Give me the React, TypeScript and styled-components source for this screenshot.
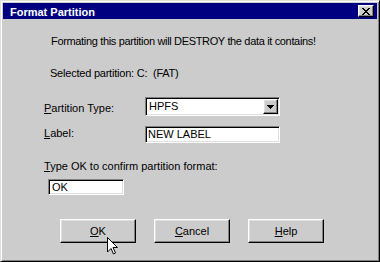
import React from 'react';
import styled, { createGlobalStyle } from 'styled-components';

const Global = createGlobalStyle`
  html, body { margin: 0; padding: 0; background: #cccccc; }
  body { font-family: "Liberation Sans", Arial, sans-serif; font-size: 11px; color: #000; }
`;

const GRAY = '#cccccc';

const Window = styled.div`
  position: relative;
  box-sizing: border-box;
  width: 380px;
  height: 262px;
  background: ${GRAY};
  border: 1px solid;
  border-color: #dfdfdf #000 #000 #dfdfdf;
  box-shadow: inset 1px 1px #fff, inset -1px -1px #808080;
  padding: 2px;
  display: flex;
  flex-direction: column;
`;

const TitleBar = styled.div`
  height: 16px;
  background: #000080;
  display: flex;
  justify-content: space-between;
  align-items: flex-start;
  padding: 0 3px 0 7px;
`;

const TitleText = styled.span`
  color: #fff;
  font-weight: bold;
  font-size: 11px;
  line-height: 14px;
  padding-top: 2px;
  white-space: nowrap;
`;

const Raised = styled.div`
  box-sizing: border-box;
  background: ${GRAY};
  border: 1px solid;
  border-color: #fff #000 #000 #fff;
  box-shadow: inset -1px -1px #808080, inset 1px 1px #dfdfdf;
  display: flex;
  align-items: center;
  justify-content: center;
`;

const CloseButton = styled(Raised)`
  width: 16px;
  height: 12px;
  margin-top: 2px;
`;

const Body = styled.div`
  display: flex;
  flex-direction: column;
  padding-left: 41px;
`;

const Message = styled.div<{ $top: number; $indent: number; $tracking?: number }>`
  margin-top: ${p => p.$top}px;
  margin-left: ${p => p.$indent}px;
  line-height: 13px;
  letter-spacing: ${p => p.$tracking ?? 0}px;
  white-space: nowrap;
`;

const Row = styled.div<{ $top: number }>`
  display: flex;
  align-items: flex-start;
  margin-top: ${p => p.$top}px;
`;

const FieldLabel = styled.label<{ $pad: number }>`
  width: 101px;
  padding-top: ${p => p.$pad}px;
  line-height: 13px;
  white-space: nowrap;
`;

const Key = styled.span`
  text-decoration: underline;
  text-decoration-thickness: 1px;
  text-underline-offset: 1px;
`;

const Sunken = styled.div<{ $w: number; $h: number }>`
  box-sizing: border-box;
  width: ${p => p.$w}px;
  height: ${p => p.$h}px;
  background: #fff;
  border: 1px solid;
  border-color: #808080 #fff #fff #808080;
  box-shadow: inset 1px 1px #000, inset -1px -1px #dfdfdf;
  display: flex;
  padding: 1px;
`;

const FieldText = styled.span<{ $lh: number; $pad: number }>`
  flex: 1;
  line-height: ${p => p.$lh}px;
  padding-left: ${p => p.$pad}px;
  white-space: nowrap;
`;

const DropButton = styled(Raised)`
  width: 15px;
  height: 15px;
`;

const ConfirmInput = styled(Sunken)`
  margin-left: 4px;
  margin-top: 6px;
`;

const ButtonRow = styled.div`
  display: flex;
  gap: 18px;
  margin-top: 24px;
  margin-left: 16px;
`;

const PushButton = styled(Raised)`
  width: 76px;
  height: 24px;
  line-height: 22px;
  align-items: flex-start;
  font-size: 11px;
`;

const Cursor = styled.svg`
  position: absolute;
  left: 106px;
  top: 236px;
  pointer-events: none;
`;

const CloseGlyph = () => (
  <svg width="8" height="7" viewBox="0 0 8 7" shapeRendering="crispEdges">
    <path
      d="M0 0h2v1h-2zM6 0h2v1h-2zM1 1h2v1h-2zM5 1h2v1h-2zM2 2h4v1h-4zM3 3h2v1h-2zM2 4h4v1h-4zM1 5h2v1h-2zM5 5h2v1h-2zM0 6h2v1h-2zM6 6h2v1h-2z"
      fill="#000"
    />
  </svg>
);

const ArrowGlyph = () => (
  <svg width="7" height="4" viewBox="0 0 7 4" shapeRendering="crispEdges">
    <path d="M0 0h7v1h-7zM1 1h5v1h-5zM2 2h3v1h-3zM3 3h1v1h-1z" fill="#000" />
  </svg>
);

export default function App() {
  return (
    <>
      <Global />
      <Window>
        <TitleBar>
          <TitleText>Format Partition</TitleText>
          <CloseButton>
            <CloseGlyph />
          </CloseButton>
        </TitleBar>
        <Body>
          <Message $top={16} $indent={7} $tracking={-0.34}>
            Formating this partition will DESTROY the data it contains!
          </Message>
          <Message $top={19} $indent={6} $tracking={-0.22}>
            Selected partition: C:&nbsp; (FAT)
          </Message>
          <Row $top={17}>
            <FieldLabel $pad={5}>
              <Key>P</Key>artition Type:
            </FieldLabel>
            <Sunken $w={135} $h={19}>
              <FieldText $lh={15} $pad={2}>HPFS</FieldText>
              <DropButton>
                <ArrowGlyph />
              </DropButton>
            </Sunken>
          </Row>
          <Row $top={10}>
            <FieldLabel $pad={1}>
              <Key>L</Key>abel:
            </FieldLabel>
            <Sunken $w={135} $h={17}>
              <FieldText $lh={13} $pad={1}>NEW LABEL</FieldText>
            </Sunken>
          </Row>
          <Message $top={17} $indent={0}>
            <Key>T</Key>ype OK to confirm partition format:
          </Message>
          <ConfirmInput $w={76} $h={16}>
            <FieldText $lh={12} $pad={2}>OK</FieldText>
          </ConfirmInput>
          <ButtonRow>
            <PushButton>
              <span><Key>O</Key>K</span>
            </PushButton>
            <PushButton>
              <span><Key>C</Key>ancel</span>
            </PushButton>
            <PushButton>
              <span><Key>H</Key>elp</span>
            </PushButton>
          </ButtonRow>
        </Body>
        <Cursor width="12" height="18" viewBox="0 0 12 18">
          <path
            d="M0.5 0.5 L0.5 15 L4 11.5 L6.5 17 L8.5 16 L6 10.5 L10.5 10.5 Z"
            fill="#fff"
            stroke="#000"
            strokeWidth="1"
            strokeLinejoin="miter"
          />
        </Cursor>
      </Window>
    </>
  );
}
